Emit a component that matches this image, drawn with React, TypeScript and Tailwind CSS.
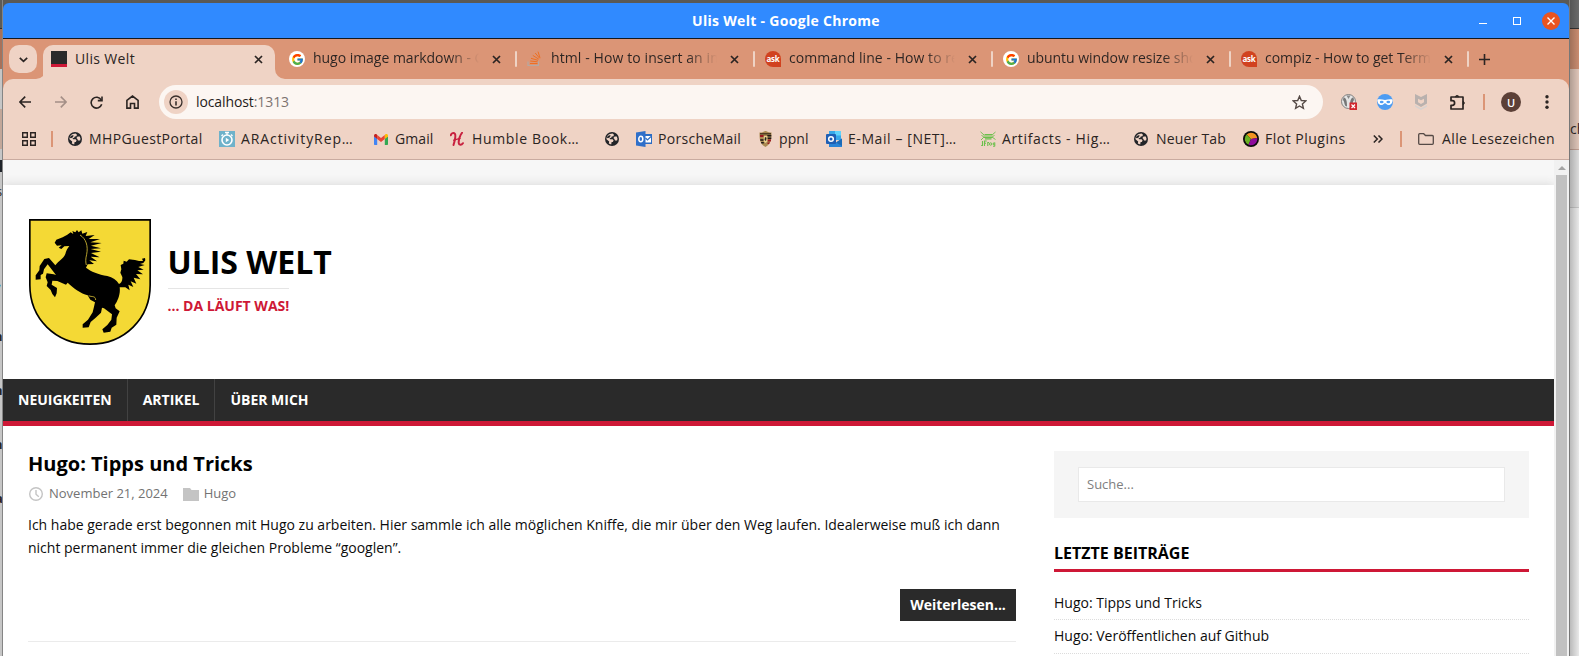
import React from "react";
import { FcGoogle } from "react-icons/fc";

const TABS = [
  { title: "hugo image markdown - Google", icon: "google", track: "tracking-[-0.03px]" },
  { title: "html - How to insert an image", icon: "stack", track: "tracking-[0.1px]" },
  { title: "command line - How to resize", icon: "ask", track: "tracking-[0.05px]" },
  { title: "ubuntu window resize shortcut", icon: "google", track: "tracking-[-0.05px]" },
  { title: "compiz - How to get Terminal", icon: "ask", track: "tracking-[-0.05px]" },
];

const BOOKMARKS = [
  { label: "MHPGuestPortal", icon: "globe", w: "w-[151px]", gap: "gap-[7px]", track: "tracking-[0.37px]" },
  { label: "ARActivityRep…", icon: "timer", w: "w-[155px]", gap: "gap-[6px]", track: "tracking-[0.9px]" },
  { label: "Gmail", icon: "gmail", w: "w-[76px]", gap: "gap-[7px]", track: "tracking-[0.1px]" },
  { label: "Humble Book…", icon: "humble", w: "w-[155px]", gap: "gap-[8px]", track: "tracking-[0.65px]" },
  { label: "", icon: "globe", w: "w-[31px]", gap: "gap-0", track: "tracking-[0px]" },
  { label: "PorscheMail", icon: "outlook", w: "w-[122px]", gap: "gap-[6px]", track: "tracking-[0.3px]" },
  { label: "ppnl", icon: "crest", w: "w-[68px]", gap: "gap-[6px]", track: "tracking-[0.1px]" },
  { label: "E-Mail – [NET]…", icon: "outlook2", w: "w-[154px]", gap: "gap-[6px]", track: "tracking-[0.58px]" },
  { label: "Artifacts - Hig…", icon: "frog", w: "w-[154px]", gap: "gap-[6px]", track: "tracking-[0.65px]" },
  { label: "Neuer Tab", icon: "globe", w: "w-[109px]", gap: "gap-[8px]", track: "tracking-[0.2px]" },
  { label: "Flot Plugins", icon: "flot", w: "w-[130px]", gap: "gap-[6px]", track: "tracking-[0.5px]" },
];

function Icon({ name }: { name: string }) {
  switch (name) {
    case "google":
      return (
        <span className="flex size-4 shrink-0 items-center justify-center rounded-full bg-white">
          <FcGoogle size={13} />
        </span>
      );
    case "stack":
      return (
        <svg className="size-4 shrink-0" viewBox="0 0 16 16" fill="none">
          <path d="M1 10.500v4h10.500v-4" stroke="#b5a9a3" strokeWidth="1.200" />
          <path d="M3 12.500h7.500M3.200 10l7.300.800M4 7.300l7 2M5.800 4.400l6 3.800M8.200 2l4.500 5.300M11 .6l2 6.200" stroke="#ee6f22" strokeWidth="1" />
        </svg>
      );
    case "ask":
      return (
        <span className="flex size-4 shrink-0 items-center justify-center rounded-t-full rounded-bl-full rounded-br-[2px] bg-[#d1421f] font-['Open_Sans',sans-serif] text-[8px] leading-none font-bold tracking-[-0.3px] text-white">
          ask
        </span>
      );
    case "globe":
      return (
        <svg className="size-[14px] shrink-0" viewBox="0 0 14 14">
          <circle cx="7" cy="7" r="7" fill="#222428" />
          <path d="M7.600 1.500 9 2.700 8.400 4.200 6.800 4.600 6.200 5.800 4.600 6.200 5 7.200h2.600L8.600 8.600 7.800 10H6.600L6.200 12.600 3.800 11.600 4.200 9.600 1.500 7.200C1.300 4.500 3.500 1.500 7.600 1.500z" fill="#efd3c5" />
          <path d="M9.600 4.600l2.200-.2.700 2.400-.4 1.600H10L9.400 7 8.400 6z" fill="#efd3c5" />
          <path d="M1.600 5.200 4 3.200l1.800.2L4.600 5.400l-1.800.8z" fill="#222428" />
        </svg>
      );
    case "timer":
      return (
        <svg className="size-4 shrink-0" viewBox="0 0 16 16" fill="none">
          <path d="M0 0h16v16H0z" fill="#6fb2ca" />
          <circle cx="8" cy="9" r="5" stroke="#fff" strokeWidth="1.600" />
          <path d="M6 1.500h4M8 1.500V4M12 3.500l1.500 1.500M4 3.500 2.500 5" stroke="#fff" strokeWidth="1.300" />
          <path d="M6.800 6.800v4.400L10.200 9z" fill="#fff" />
        </svg>
      );
    case "gmail":
      return (
        <svg className="h-[11px] w-[14px] shrink-0" viewBox="0 0 14 11">
          <path d="M0 2v8c0 .6.4 1 1 1h2.200V4.500z" fill="#4285f4" />
          <path d="M14 2v8c0 .6-.4 1-1 1h-2.200V4.500z" fill="#34a853" />
          <path d="M3.200 1 7 4l3.800-3v4L7 8 3.200 5z" fill="#ea4335" />
          <path d="M0 1.700C0 .2 1.700-.4 2.800.6l.4.4v4L0 2.600z" fill="#c5221f" />
          <path d="M14 1.700C14 .2 12.300-.4 11.200.6l-.4.4v4L14 2.600z" fill="#fbbc04" />
        </svg>
      );
    case "humble":
      return (
        <svg className="size-[14px] shrink-0" viewBox="0 0 14 14" fill="none" stroke="#c8213f" strokeLinecap="round">
          <path d="M.8 3.200C1.400 1 3.800.4 4.900 1.800 6 3.500 5 8 3.500 13M12 .8C10 3 8.500 8 8.700 11c.2 2.200 2.800 2.400 4.200.2" strokeWidth="2" />
          <path d="M3.800 8.200 10 6.400" strokeWidth="1.400" />
        </svg>
      );
    case "outlook":
      return (
        <svg className="size-4 shrink-0" viewBox="0 0 16 16" fill="none">
          <path d="M8 3h8v10H8z" fill="#2b6cc4" />
          <path d="M9 5h6v6.500H9z" fill="#fff" />
          <path d="m9.500 7 2 2L15 5.500" stroke="#2b6cc4" strokeWidth="1.200" />
          <path d="M0 1.500 9.500 0v16L0 14.500z" fill="#2f6fc9" />
          <ellipse cx="4.800" cy="8" rx="2" ry="2.700" stroke="#fff" strokeWidth="1.500" />
        </svg>
      );
    case "outlook2":
      return (
        <svg className="size-4 shrink-0" viewBox="0 0 16 16" fill="none">
          <path d="M3 0h12v9H3z" fill="#37a7e8" />
          <path d="M9 0h6v4.500H9z" fill="#5fd3fb" />
          <path d="M3 8.500 9.500 12 16 7.500V16H3z" fill="#2a84d6" />
          <path d="M16 7.500V15l-6-3.500z" fill="#1b6bb8" />
          <rect y="3" width="10" height="10" rx="1" fill="#1f5fb4" />
          <circle cx="5" cy="8" r="2.300" stroke="#fff" strokeWidth="1.500" />
        </svg>
      );
    case "crest":
      return (
        <svg className="mx-px h-4 w-[13px] shrink-0" viewBox="0 0 13 16">
          <path d="M.5 1.500C4 2 5 0 6.500 0s2.500 2 6 1.500C12.500 9 12 13 6.500 16 1 13 .5 9 .5 1.500z" fill="#a98a52" />
          <path d="M1 4h3.600v2H1.100zM8.500 8.500h3.700l-.5 2H8.500zM8.500 11.500H11l-1 1.500H8.500z" fill="#9c1820" />
          <path d="M8.300 4h4v1.600h-4zM8.300 6.500h4v1.400h-4zM1.200 8.300h3.500v1.500H1.300zM1.900 11h2.900v1.600H2.500z" fill="#211a18" />
          <path d="M1 2.200h11v1.200H1z" fill="#3a2b1a" />
          <path d="M4.800 5h3.600v5.500L6.500 12l-1.700-1.500z" fill="#e8d08f" />
          <path d="m5.500 9 .5-3 1.600.8-.6 3.200z" fill="#2b2320" />
        </svg>
      );
    case "frog":
      return (
        <svg className="size-4 shrink-0" viewBox="0 0 16 16" fill="none" stroke="#6bc04b">
          <path d="M4.500 3.500h7.500M3.500 5h9M4 6.500h8.500M5 7.800h6.500" strokeWidth="1.200" />
          <path d="M.5.800 4 4M15.500 1 12 4M1 9l3-3M15.500 8.500 12 6M1.500 4.500l2 1M14.500 4.500l-2 1" strokeWidth=".9" />
          <path d="M2.500 10v4.500H1.200M4.500 15v-5h2.200M4.500 12.300H6M7.800 15v-3.500h1.200" strokeWidth="1.100" />
          <circle cx="10.600" cy="13" r="1.200" strokeWidth="1" />
          <path d="M14.800 11.500v3.800h-1.700M14.800 12h-1.500v1.800h1.500" strokeWidth="1" />
        </svg>
      );
    default:
      return (
        <svg className="size-4 shrink-0" viewBox="0 0 16 16">
          <circle cx="8" cy="8" r="8" fill="#0b0b0b" />
          <path d="M8 8 3.600 3.600A6.300 6.300 0 0 1 14.200 7z" fill="#f39422" />
          <path d="M8 8 3.600 3.600A6.300 6.300 0 0 0 5.500 13.700z" fill="#6ab023" />
          <path d="m8 8 6.200-1A6.300 6.300 0 0 1 5.500 13.700z" fill="#8e0b9c" />
        </svg>
      );
  }
}

function Close() {
  return (
    <svg className="size-[9px] shrink-0" viewBox="0 0 9 9" stroke="#2b2422" strokeWidth="1.700">
      <path d="m1 1 7 7M8 1 1 8" />
    </svg>
  );
}

function TitleBar() {
  return (
    <div className="flex h-9 items-center rounded-t-[6px] border-b border-[#14191f] bg-[#308aff] pr-[9px] pl-[100px]">
      <h1 className="flex-1 pb-px text-center text-[14px] font-bold tracking-[0.3px] text-white">Ulis Welt - Google Chrome</h1>
      <div className="flex w-[91px] items-center justify-end">
        <svg className="h-[9px] w-2" viewBox="0 0 8 9"><path d="M0 7h8v1H0z" fill="#fff" /></svg>
        <span className="ml-[26px] size-2 border border-white" />
        <svg className="ml-[21px] size-[18px] shrink-0" viewBox="0 0 18 18">
          <circle cx="9" cy="9" r="9" fill="#e95420" />
          <path d="m5.500 5.500 7 7m0-7-7 7" stroke="#fff" strokeWidth="1.400" />
        </svg>
      </div>
    </div>
  );
}

function TabStrip() {
  return (
    <div className="flex h-10 items-center bg-[#db9576] pl-[6px]">
      <button className="flex size-7 items-center justify-center rounded-[10px] bg-[#efd3c5]">
        <svg className="size-[9px]" viewBox="0 0 9 9" fill="none" stroke="#2b2422" strokeWidth="1.700"><path d="m.8 2.800 3.700 3.500 3.700-3.500" /></svg>
      </button>
      <svg className="mt-[30px] -ml-px size-[10px]" viewBox="0 0 10 10"><path d="M10 0a10 10 0 0 1-10 10h10z" fill="#efd3c5" /></svg>
      <div className="-ml-[3px] flex h-[34px] w-[232px] items-center self-end rounded-t-[10px] bg-[#efd3c5] pr-3 pb-[6px] pl-2">
        <span className="size-4 border-b-[3px] border-[#ce1836] bg-[#2a2a2a]" />
        <span className="ml-2 flex-1 pb-[2px] tracking-[0.35px]">Ulis Welt</span>
        <Close />
      </div>
      <svg className="mt-[30px] size-[10px]" viewBox="0 0 10 10"><path d="M0 0a10 10 0 0 0 10 10H0z" fill="#efd3c5" /></svg>
      {TABS.map((t, i) => (
        <div key={i} className="flex h-4 w-[238px] shrink-0 items-center pl-[4px]">
          <Icon name={t.icon} />
          <span className={`ml-2 w-[166px] overflow-hidden bg-gradient-to-r from-[#2b2422] from-82% to-transparent to-100% bg-clip-text pb-[2px] leading-5 whitespace-nowrap text-transparent ${t.track}`}>{t.title}</span>
          <span className="ml-[13px] flex"><Close /></span>
          <span className={`h-4 w-[2px] rounded bg-[#efd3c5] ${i === 0 ? "ml-[14px]" : "ml-[14px]"}`} />
        </div>
      ))}
      <svg className="ml-[4px] size-[11px] shrink-0" viewBox="0 0 11 11" stroke="#2b2422" strokeWidth="1.600"><path d="M5.500 0v11M0 5.500h11" /></svg>
    </div>
  );
}

function Toolbar() {
  return (
    <div className="flex h-[46px] items-center rounded-t-[10px] bg-[#efd3c5] pr-[17px] pl-4">
      <svg className="size-3 shrink-0" viewBox="0 0 12 12" fill="none" stroke="#2b2422" strokeWidth="1.600"><path d="M12 6H1M6.200.6.900 6l5.300 5.400" /></svg>
      <svg className="ml-6 size-3 shrink-0" viewBox="0 0 12 12" fill="none" stroke="#a48f87" strokeWidth="1.600"><path d="M0 6h11M5.800.6 11.100 6l-5.300 5.400" /></svg>
      <svg className="ml-[23px] size-[13px] shrink-0" viewBox="0 0 13 13" fill="none" stroke="#2b2422" strokeWidth="1.600"><path d="M11.700 8.300A5.400 5.400 0 1 1 11.200 3.900" /><path d="M12 .4v4.200H7.800" /></svg>
      <svg className="ml-[23px] h-[14px] w-[13px] shrink-0" viewBox="0 0 13 14" fill="none" stroke="#2b2422" strokeWidth="1.600"><path d="M.9 13.100V5.300L6.500 1l5.600 4.300v7.800H8.500V8.500h-4v4.600z" /></svg>
      <div className="ml-[20px] flex h-[34px] w-[1164px] shrink-0 items-center rounded-full bg-[#fcf6f2] pr-4 pl-[5px]">
        <span className="flex size-6 items-center justify-center rounded-full bg-[#efd3c5]">
          <svg className="size-[14px]" viewBox="0 0 14 14" fill="none" stroke="#3a302c" strokeWidth="1.300"><circle cx="7" cy="7" r="6" /><path d="M7 6.200v4.200M7 3.400v1.500" strokeWidth="1.600" /></svg>
        </span>
        <span className="ml-2 flex-1 pb-[2px] tracking-[-0.1px] text-[#1f1b1a]">localhost<span className="text-[#7c7370]">:1313</span></span>
        <svg className="size-[15px]" viewBox="0 0 15 15" fill="none" stroke="#554a46" strokeWidth="1.400"><path d="m7.500 1.300 1.800 4.200 4.500.4-3.400 3 1 4.500-3.900-2.400-3.900 2.400 1-4.500-3.400-3 4.500-.4z" /></svg>
      </div>
      <svg className="ml-[18px] size-4 shrink-0" viewBox="0 0 16 16">
        <circle cx="7.500" cy="7.500" r="7" fill="#e4e4e4" stroke="#777" strokeWidth=".9" />
        <path d="M2.600 3.200C5.500 4 6 7.500 6 12.500L4.500 12C3 10 3.500 7.500 2 6zM12.400 3.200C9.500 4 9 7.500 9 12.500h1.500C12 10 11.500 7.500 13 6z" fill="#777" />
        <path d="M5.500 1.500 7.500 5l2-3.500z" fill="#888" />
        <path d="M8.500 8.500H16V16H8.500z" fill="#d1282e" />
        <path d="m10.500 10.500 3.500 3.500m0-3.500L10.500 14" stroke="#fff" strokeWidth="1.200" />
      </svg>
      <svg className="ml-5 size-4 shrink-0" viewBox="0 0 16 16">
        <circle cx="8" cy="8" r="8" fill="#4d9cf2" />
        <path d="M.4 5.500C3 4.700 5.500 5.500 8 6c2.500-.5 5-1.300 7.600-.5.200 3-1.300 5.500-4.100 5.500C9.500 11 9 9.300 8 9.300S6.500 11 4.500 11C1.700 11 .2 8.500.4 5.500z" fill="#fff" />
        <ellipse cx="4.700" cy="8" rx="1.900" ry="1.200" fill="#4d9cf2" /><ellipse cx="11.300" cy="8" rx="1.900" ry="1.200" fill="#4d9cf2" />
      </svg>
      <svg className="ml-[22px] h-4 w-3 shrink-0" viewBox="0 0 12 16">
        <path d="M0 0l6 3 6-3v9.500L6 13 0 9.500z" fill="#b9b1ae" />
        <path d="M3 4.800 6 6.300l3-1.500v3.400L6 10 3 8.200z" fill="#efd3c5" />
        <path d="M0 11l6 3.200L12 11v1.700L6 16l-6-3.300z" fill="#d8d2cf" />
      </svg>
      <svg className="ml-[22px] size-[17px] shrink-0" viewBox="0 0 17 17" fill="none" stroke="#2b2422" strokeWidth="1.700" strokeLinejoin="round">
        <path d="M2 3h12v12H2v-3.700h1.300a2.300 2.300 0 0 0 0-4.600H2z" />
        <path d="M6.200 2.800a2 2 0 0 1 3.800 0zM14.200 7.200a2 2 0 0 1 0 3.600z" fill="#2b2422" strokeWidth=".8" />
      </svg>
      <span className="ml-[17px] h-4 w-[2px] bg-[#db9576]" />
      <span className="ml-4 flex size-5 shrink-0 items-center justify-center rounded-full bg-[#5c4037] text-[11px] leading-none font-semibold text-white">U</span>
      <svg className="ml-6 h-[14px] w-[4px] shrink-0" viewBox="0 0 4 14" fill="#2b2422"><circle cx="2" cy="1.800" r="1.700" /><circle cx="2" cy="7" r="1.700" /><circle cx="2" cy="12.200" r="1.700" /></svg>
    </div>
  );
}

function BookmarkBar() {
  return (
    <div className="flex h-[35px] items-center border-b border-[#c9aba0] bg-[#efd3c5] pb-[6px] pl-[19px] whitespace-nowrap">
      <svg className="size-[14px] shrink-0" viewBox="0 0 14 14" fill="none" stroke="#2b2422" strokeWidth="1.400"><path d="M.7.700h4.600v4.600H.7zM8.700.700h4.600v4.600H8.700zM.7 8.700h4.600v4.600H.7zM8.700 8.700h4.600v4.600H8.700z" /></svg>
      <span className="ml-[15px] h-4 w-[2px] shrink-0 bg-[#db9576]" />
      <div className="ml-[15px] flex shrink-0 items-center">
        {BOOKMARKS.map((b, i) => (
          <div key={i} className={`flex shrink-0 items-center ${b.w} ${b.gap}`}>
            <Icon name={b.icon} />
            {b.label && <span className={`pb-[2px] ${b.track}`}>{b.label}</span>}
          </div>
        ))}
      </div>
      <svg className="h-2 w-[10px] shrink-0" viewBox="0 0 10 8" fill="none" stroke="#2b2422" strokeWidth="1.500"><path d="m.8.500 3.500 3.500L.8 7.500M5.500.500 9 4 5.500 7.500" /></svg>
      <span className="ml-[17px] h-4 w-[2px] shrink-0 bg-[#db9576]" />
      <svg className="ml-4 h-3 w-4 shrink-0" viewBox="0 0 16 12" fill="none" stroke="#554a46" strokeWidth="1.300"><path d="M.7 1.700c0-.6.4-1 1-1h4L7.500 2.500h6.800c.6 0 1 .4 1 1v6.800c0 .6-.4 1-1 1H1.700c-.6 0-1-.4-1-1z" /></svg>
      <span className="ml-2 pb-[2px] tracking-[0.38px]">Alle Lesezeichen</span>
    </div>
  );
}

function Crest() {
  return (
    <svg className="h-[126px] w-[122px] shrink-0" viewBox="27 27 366 378">
      <path d="M29.500 29.500h361V225c0 100-76 177.500-180.500 177.500S29.500 325 29.500 225z" fill="#f4d935" stroke="#000" strokeWidth="5" />
      <path d="M160 72 157 63 166 67 171 60 176 67 184 61 187 71 202 66 197 78 224 75 206 87 240 87 211 97 245 99 213 107 243 115 212 117 243 125 213 129 239 142 212 140 231 154 208 151 222 162 203 163 198 173C212 184 236 194 262 198 278 202 290 210 297 222 303 219 308 212 307 201L301 188 304 178 302 165 310 161 311 152 320 155 327 148 345 150 357 153 369 153 366 146 375 144 376 151 370 159 360 162 374 165 355 171 371 179 352 181 369 193 348 192 361 208 341 203 349 221 332 214 340 231 325 224 329 241 316 232 299 232C302 252 293 273 284 286L287 295 299 304 290 323 289 344 275 353 271 365 251 368 247 358 262 345 274 329 276 313 252 295 246 293 243 308 227 323 212 336 206 352 188 353 188 343 204 329 218 307 222 290 225 277 211 269 203 256C183 251 160 234 143 218L138 224 112 213 97 212 95 224 111 234 110 250 105 262 97 252 92 240 80 228 83 217 77 202 80 190 101 193 108 195 83 163 72 178 69 191 62 195 62 208 47 209 47 196 58 181 59 168 73 147 87 144 106 166C116 152 130 147 136 132 138 122 143 115 148 108L133 109 124 117 116 113 125 106 111 107 104 98 109 89 128 82 142 74 152 67z" fill="#000" />
      <path d="M180 75C198 86 205 108 200 133 196 148 197 158 199 165M206 257C216 262 226 256 227 270" fill="none" stroke="#d8bf35" strokeWidth="2.500" />
    </svg>
  );
}

function Header() {
  return (
    <header className="flex h-[194px] items-start pt-[34px] pl-[26px]">
      <Crest />
      <div className="ml-[16.500px] flex flex-col items-start pt-[22px]">
        <h2 className="text-[32px] leading-[42px] font-bold text-black">ULIS WELT</h2>
        <p className="mt-[5px] border-t border-[#e5e5e5] pt-[6px] text-[14px] leading-[21px] font-bold text-[#ce1836]">... DA LÄUFT WAS!</p>
      </div>
    </header>
  );
}

function Nav() {
  return (
    <nav className="flex h-[47px] border-b-[5px] border-[#ce1836] bg-[#2a2a2a] text-[14px] font-bold text-white">
      {["NEUIGKEITEN", "ARTIKEL", "ÜBER MICH"].map((n, i) => (
        <a key={n} className={`flex h-full items-center px-[15px] pb-[2px] ${i < 2 ? "border-r border-[#424242]" : ""}`}>{n}</a>
      ))}
    </nav>
  );
}

function Article() {
  return (
    <article className="w-[988px] border-b border-[#ebebeb]">
      <h3 className="text-[20px] leading-[26px] font-bold text-black">Hugo: Tipps und Tricks</h3>
      <div className="mt-2 flex h-[18px] items-center text-[13px] text-[#737373]">
        <svg className="ml-px size-[14px]" viewBox="0 0 14 14" fill="none" stroke="#c4c4c4" strokeWidth="1.400"><circle cx="7" cy="7" r="6.300" /><path d="M7 3v4.200l2.800 2.500" /></svg>
        <span className="ml-[6px]">November 21, 2024</span>
        <svg className="ml-[15px] h-[13px] w-4" viewBox="0 0 16 13"><path d="M0 0h7l1.500 2H16v11H0z" fill="#c4c4c4" /></svg>
        <span className="ml-[5px]">Hugo</span>
      </div>
      <p className="mt-[10px] text-[14px] leading-[23px] text-[#0d0d0d]">
        Ich habe gerade erst begonnen mit Hugo zu arbeiten. Hier sammle ich alle möglichen Kniffe, die mir über den Weg laufen. Idealerweise muß ich dann nicht permanent immer die gleichen Probleme “googlen”.
      </p>
      <div className="mt-[30px] mb-5 flex justify-end">
        <a className="flex h-8 w-[116px] items-center justify-center bg-[#2a2a2a] pb-[2px] text-[14px] font-bold text-white">Weiterlesen...</a>
      </div>
    </article>
  );
}

function Sidebar() {
  return (
    <aside className="w-[475px]">
      <div className="h-[67px] bg-[#f5f5f5] px-6 py-4">
        <div className="flex h-[35px] items-center border border-[#e9e9e9] bg-white px-2 text-[13px] text-[#808080]">Suche...</div>
      </div>
      <h4 className="mt-[23px] h-[31px] border-b-[3px] border-[#ce1836] text-[16px] leading-6 font-bold text-black">LETZTE BEITRÄGE</h4>
      <ul className="mt-[14px] text-[14px] text-[#0d0d0d]">
        <li className="flex h-[34px] items-center border-b border-dotted border-[#dcdcdc]">Hugo: Tipps und Tricks</li>
        <li className="flex h-[34px] items-center border-b border-dotted border-[#dcdcdc] pb-[2px]">Hugo: Veröffentlichen auf Github</li>
      </ul>
    </aside>
  );
}

export default function App() {
  return (
    <div className="flex h-[656px] w-[1579px] overflow-hidden bg-[#bcbcbc] font-['Open_Sans',sans-serif] text-[14px] text-[#2b2422]">
      <div className="flex w-[3px] shrink-0 flex-col overflow-hidden border-r border-[#858585] bg-[linear-gradient(#5c5b57_0_28px,#2e2e2e_28px_29px,#a87159_29px_69px,#c6c6c6_69px_109px,#c2a799_109px_149px,#c6c6c6_149px)] pt-[160px] text-[13px]">
        <span className="h-[22px] shrink-0 bg-[linear-gradient(#20242a_0_12px,transparent_12px)]" />
        <span className="-ml-[4px] h-[90px] shrink-0">s</span>
        <span className="-ml-[2px] h-[55px] shrink-0 text-[#1666a8]">,</span>
        <span className="-ml-[6px] h-[54px] shrink-0 font-bold">n</span>
        <span className="-ml-[6px] h-[54px] shrink-0 font-bold">n</span>
        <span className="-ml-[6px] h-[54px] shrink-0 font-bold">n</span>
        <span className="-ml-[5px] h-[54px] shrink-0 font-bold">a</span>
      </div>
      <div className="flex w-[1566px] shrink-0 flex-col bg-[#5a5955] pt-[3px]">
        <TitleBar />
        <div className="flex flex-col bg-[#db9576]">
          <TabStrip />
          <Toolbar />
          <BookmarkBar />
        </div>
        <div className="flex h-[496px] overflow-hidden">
          <main className="w-[1551px] shrink-0 bg-[#f7f7f7] pt-[25px]">
            <div className="h-[471px] bg-white shadow-[0_0_10px_rgba(50,50,50,0.17)]">
              <Header />
              <Nav />
              <div className="flex items-start gap-[38px] pt-[25px] pl-[25px]">
                <Article />
                <Sidebar />
              </div>
            </div>
          </main>
          <div className="flex w-[15px] shrink-0 flex-col items-center bg-[#f1f1f1]">
            <svg className="mt-[6px] h-[4px] w-[8px] shrink-0" viewBox="0 0 8 4"><path d="M4 0l4 4H0z" fill="#a3a3a3" /></svg>
            <span className="mt-[5px] -ml-px w-[11px] flex-1 bg-[#c1c1c1]" />
          </div>
        </div>
      </div>
      <div className="w-[10px] shrink-0 bg-[linear-gradient(#6a6a6a_0_28px,#333_28px_29px,#c98c70_29px_69px,#dec5b8_69px_149px,#bf9f92_149px_150px,#dcdcdc_150px_207px,#c4c4c4_207px_208px,#e9e9e9_208px)]">
        <div className="h-full overflow-hidden border-l border-[#777] bg-gradient-to-r from-black/20 to-transparent pt-[119px] leading-5">ch</div>
      </div>
    </div>
  );
}
